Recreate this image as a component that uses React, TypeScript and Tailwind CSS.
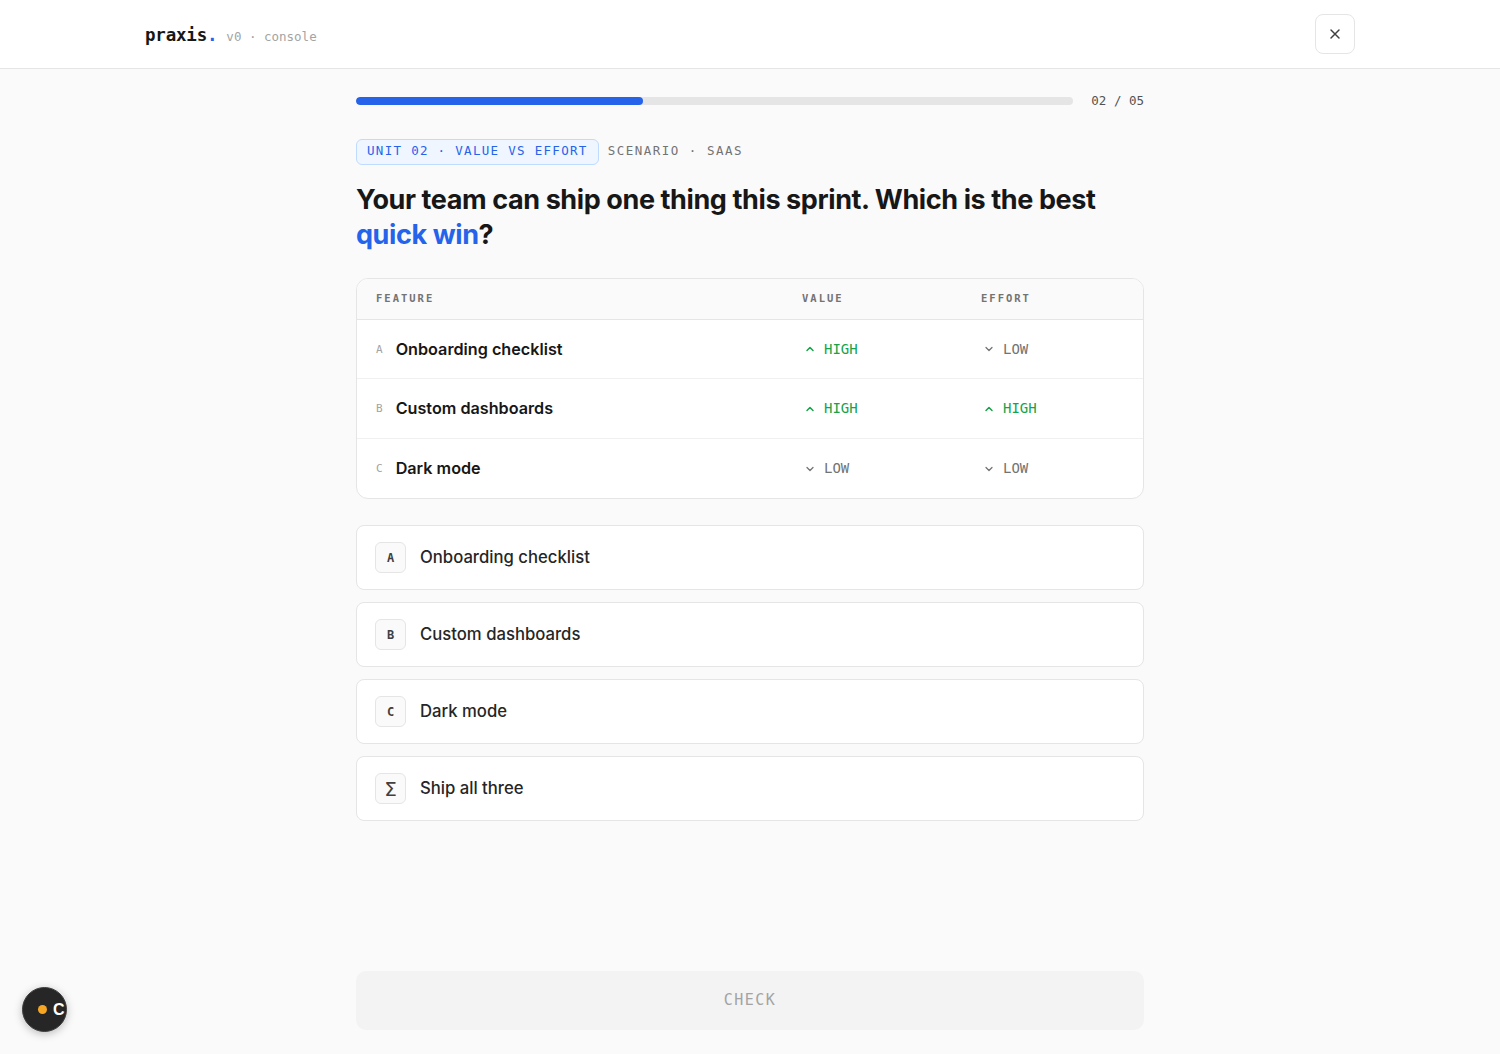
import React from "react";

const mono = "font-['DejaVu_Sans_Mono','Liberation_Mono',monospace]";
const sans = "font-['Inter','Noto_Sans',sans-serif]";

function Up() {
  return (
    <svg width="12" height="12" viewBox="0 0 24 24" fill="none" stroke="currentColor" strokeWidth="3" strokeLinecap="round" strokeLinejoin="round">
      <path d="M6 15l6-6 6 6" />
    </svg>
  );
}

function Down() {
  return (
    <svg width="12" height="12" viewBox="0 0 24 24" fill="none" stroke="currentColor" strokeWidth="2.5" strokeLinecap="round" strokeLinejoin="round">
      <path d="M6 9l6 6 6-6" />
    </svg>
  );
}

function Level({ high }: { high: boolean }) {
  return high ? (
    <span className={`flex items-center gap-[8px] text-[#16a34a] text-[14px] ${mono}`}>
      <Up />
      HIGH
    </span>
  ) : (
    <span className={`flex items-center gap-[8px] text-[#737373] text-[14px] ${mono}`}>
      <Down />
      LOW
    </span>
  );
}

const rows = [
  { k: "A", name: "Onboarding checklist", value: true, effort: false },
  { k: "B", name: "Custom dashboards", value: true, effort: true },
  { k: "C", name: "Dark mode", value: false, effort: false },
];

const options = [
  { k: "A", label: "Onboarding checklist" },
  { k: "B", label: "Custom dashboards" },
  { k: "C", label: "Dark mode" },
  { k: "Σ", label: "Ship all three" },
];

export default function App() {
  return (
    <div className={`min-h-[1054px] bg-[#fafafa] flex flex-col ${sans}`}>
      <header className="h-[69px] bg-white border-b border-[#e5e5e5] flex items-center justify-between pl-[145px] pr-[145px]">
        <div className={`flex items-baseline gap-[9px] mt-[2px] ${mono}`}>
          <span className="text-[17.5px] font-bold text-[#171717] tracking-[-0.2px]">
            praxis<span className="text-[#2563eb]">.</span>
          </span>
          <span className="text-[12.5px] text-[#a3a3a3]">v0 · console</span>
        </div>
        <button className="w-[40px] h-[40px] rounded-[8px] border border-[#e5e5e5] bg-white flex items-center justify-center text-[#404040]">
          <svg width="16" height="16" viewBox="0 0 24 24" fill="none" stroke="currentColor" strokeWidth="2.2" strokeLinecap="round">
            <path d="M6 6l12 12M18 6L6 18" />
          </svg>
        </button>
      </header>

      <main className="flex-1 flex flex-col w-[788px] mx-auto">
        <div className="flex items-center gap-[18px] mt-[23px]">
          <div className="flex-1 h-[8px] rounded-full bg-[#e5e5e5] overflow-hidden">
            <div className="h-full w-[40%] bg-[#2563eb] rounded-full" />
          </div>
          <span className={`text-[12.5px] text-[#525252] ${mono}`}>02 / 05</span>
        </div>

        <div className={`flex items-center gap-[9px] mt-[28px] ${mono}`}>
          <span className="h-[26px] px-[10px] flex items-center rounded-[6px] bg-[#eff6ff] border border-[#bfdbfe] text-[#2563eb] text-[12.5px] tracking-[1.3px]">
            UNIT 02 · VALUE VS EFFORT
          </span>
          <span className="text-[12.5px] text-[#737373] tracking-[1.5px]">SCENARIO · SAAS</span>
        </div>

        <h1 className="mt-[17px] text-[27px] leading-[35px] font-bold text-[#171717] tracking-[-0.4px]">
          Your team can ship one thing this sprint. Which is the best{" "}
          <span className="text-[#2563eb]">quick win</span>?
        </h1>

        <div className="mt-[26px] rounded-[12px] border border-[#e5e5e5] bg-white overflow-hidden">
          <div className={`grid grid-cols-[1fr_179px_181px] h-[41px] items-center bg-[#fafafa] border-b border-[#e5e5e5] text-[10.5px] font-bold tracking-[2px] text-[#737373] ${mono}`}>
            <span className="pl-[19px]">FEATURE</span>
            <span className="pl-[19px]">VALUE</span>
            <span className="pl-[19px]">EFFORT</span>
          </div>
          {rows.map((r, i) => (
            <div
              key={r.k}
              className={`grid grid-cols-[1fr_179px_181px] h-[59.5px] items-center ${i < rows.length - 1 ? "border-b border-[#f0f0f0]" : ""}`}
            >
              <div className="flex items-center pl-[19px] gap-[13px]">
                <span className={`text-[11px] text-[#a3a3a3] mt-[2px] ${mono}`}>{r.k}</span>
                <span className="text-[16.2px] font-semibold text-[#171717]">{r.name}</span>
              </div>
              <div className="pl-[21px]">
                <Level high={r.value} />
              </div>
              <div className="pl-[21px]">
                <Level high={r.effort} />
              </div>
            </div>
          ))}
        </div>

        <div className="mt-[26px] flex flex-col gap-[12px]">
          {options.map((o) => (
            <button
              key={o.label}
              className="h-[65px] rounded-[8px] border border-[#e5e5e5] bg-white flex items-center pl-[18px] gap-[14px] text-left"
            >
              <span
                className={`w-[31px] h-[31px] rounded-[6px] border border-[#e5e5e5] bg-[#fafafa] flex items-center justify-center text-[#404040] ${
                  o.k === "Σ" ? "text-[20px] font-['DejaVu_Sans',sans-serif]" : `text-[12px] font-bold ${mono}`
                }`}
              >
                {o.k}
              </span>
              <span className="text-[16.7px] font-medium text-[#262626]">{o.label}</span>
            </button>
          ))}
        </div>

        <div className="flex-1" />

        <button className={`mb-[24px] h-[59px] rounded-[10px] bg-[#f3f3f3] text-[#a3a3a3] text-[15px] tracking-[1.5px] ${mono}`}>
          CHECK
        </button>
      </main>

      <div className="absolute left-[22px] top-[987px] w-[45px] h-[45px] rounded-full bg-[#262626] border border-[#3f3f3f] shadow-[0_2px_8px_rgba(0,0,0,0.25)] flex items-center pl-[15px] gap-[6px] overflow-hidden">
        <span className="w-[9px] h-[9px] rounded-full bg-[#f5a623] shrink-0" />
        <span className="text-white text-[16px] font-semibold font-['Liberation_Sans',sans-serif]">C</span>
      </div>
    </div>
  );
}
